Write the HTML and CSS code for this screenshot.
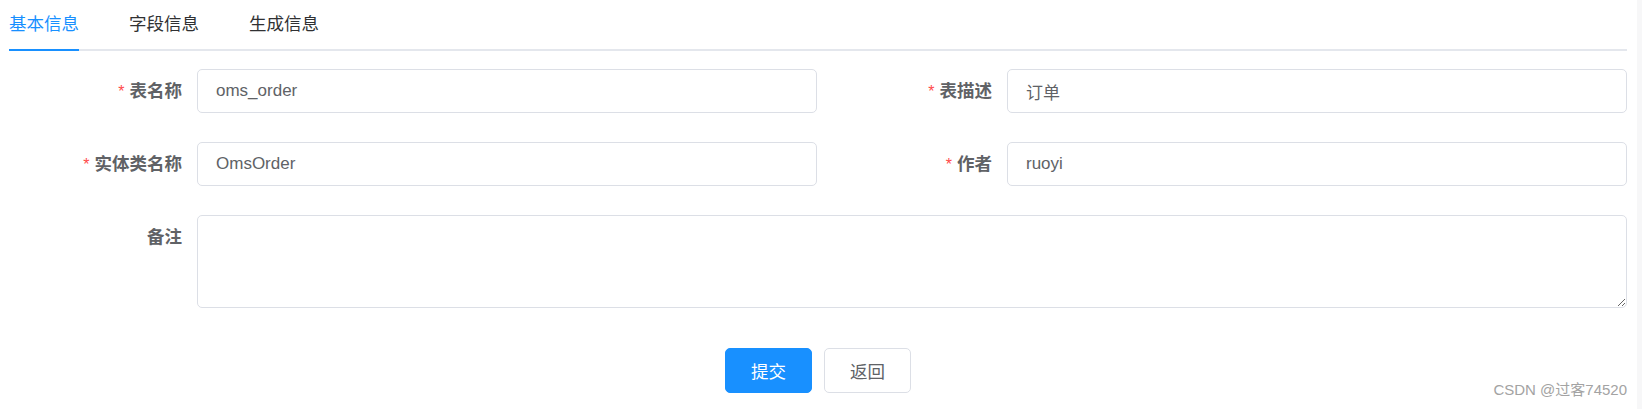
FILE: index.html
```html
<!DOCTYPE html>
<html lang="zh-CN">
<head>
    <meta charset="UTF-8">
    <title>修改生成配置</title>
    <link rel="stylesheet" href="styles.css">
</head>
<body>

<div class="page">
    <div class="tabs">
        <div class="tab active">基本信息</div>
        <div class="tab">字段信息</div>
        <div class="tab">生成信息</div>
    </div>

    <form class="form">
        <div class="row">
            <div class="item">
                <label class="label required">表名称</label>
                <input class="input" type="text" value="oms_order">
            </div>
            <div class="item">
                <label class="label required">表描述</label>
                <input class="input" type="text" value="订单">
            </div>
        </div>
        <div class="row">
            <div class="item">
                <label class="label required">实体类名称</label>
                <input class="input" type="text" value="OmsOrder">
            </div>
            <div class="item">
                <label class="label required">作者</label>
                <input class="input" type="text" value="ruoyi">
            </div>
        </div>
        <div class="item">
            <label class="label">备注</label>
            <textarea class="textarea"></textarea>
        </div>

        <div class="actions">
            <button type="button" class="btn primary">提交</button>
            <button type="button" class="btn">返回</button>
        </div>
    </form>

    <div class="watermark">CSDN @过客74520</div>
</div>

</body>
</html>
```

FILE: styles.css
```css
html, body {
    margin: 0;
    height: 100%;
}
body {
    font-family: "Liberation Sans", "Noto Sans CJK SC", sans-serif;
    background-color: #fff;
    border-right: 5px solid #f7f7f8;
    box-sizing: border-box;
}
.page {
    position: relative;
    height: 100%;
    padding: 0 10px 0 9px;
    box-sizing: border-box;
}
.tabs {
    display: flex;
    gap: 50px;
    border-bottom: 2px solid #e4e7ed;
}
.tab {
    height: 49px;
    line-height: 49px;
    font-size: 17.5px;
    color: #303133;
    border-bottom: 2px solid transparent;
    margin-bottom: -2px;
}
.tab.active {
    color: #1890ff;
    border-bottom-color: #1890ff;
}
.form {
    padding-top: 18px;
}
.row {
    display: grid;
    grid-template-columns: 1fr 1fr;
    column-gap: 2px;
}
.item {
    display: flex;
    align-items: flex-start;
    margin-bottom: 29px;
}
.label {
    flex: 0 0 188px;
    height: 44px;
    box-sizing: border-box;
    padding-right: 15px;
    text-align: right;
    line-height: 44px;
    font-size: 17.5px;
    font-weight: bold;
    color: #606266;
    overflow: hidden;
}
.label.required::before {
    content: "*";
    color: #ff4949;
    margin-right: 5px;
    font-weight: normal;
    font-size: 16px;
}
.input {
    flex: 1;
    min-width: 0;
    height: 44px;
    box-sizing: border-box;
    padding: 0 18px;
    border: 1px solid #dcdfe6;
    border-radius: 5px;
    font-family: inherit;
    font-size: 17px;
    color: #606266;
    outline: none;
}
.textarea {
    flex: 1;
    height: 93px;
    box-sizing: border-box;
    padding: 6px 18px;
    border: 1px solid #dcdfe6;
    border-radius: 5px;
    font-family: inherit;
    font-size: 17px;
    color: #606266;
    resize: vertical;
    outline: none;
}
.actions {
    display: flex;
    justify-content: center;
    gap: 12px;
    margin-top: 40px;
}
.btn {
    width: 87px;
    height: 45px;
    border: 1px solid #dcdfe6;
    border-radius: 5px;
    background-color: #fff;
    color: #606266;
    font-family: inherit;
    font-size: 17.5px;
    cursor: pointer;
}
.btn.primary {
    background-color: #1890ff;
    border-color: #1890ff;
    color: #fff;
}
.watermark {
    position: absolute;
    right: 10px;
    bottom: 10px;
    font-size: 15px;
    color: #a3a3a3;
}
```
